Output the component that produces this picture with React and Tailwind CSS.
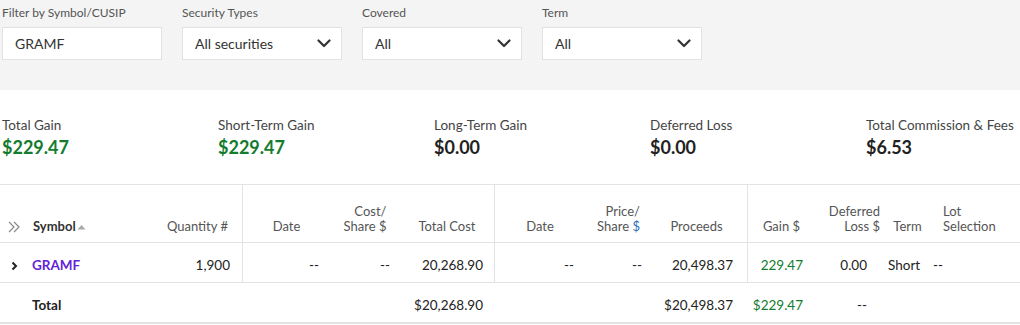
import React from "react";

const F = { fontFamily: "Lato, 'Noto Sans', sans-serif" };

function Chevron() {
  return (
    <svg width="14" height="9" viewBox="0 0 14 9" fill="none">
      <path d="M1.5 1.5 L7 7 L12.5 1.5" stroke="#333" strokeWidth="2.2" strokeLinecap="round" strokeLinejoin="round" />
    </svg>
  );
}

function Select({ label, value }) {
  return (
    <div className="flex flex-col w-[160px]">
      <div className="text-[12px] leading-[14px] text-[#555]">{label}</div>
      <div className="mt-[7px] h-[33px] bg-white border border-[#e2e2e2] flex items-center justify-between pl-[12px] pr-[10px]">
        <span className="text-[14px] text-[#333]">{value}</span>
        {value !== "GRAMF" && <Chevron />}
      </div>
    </div>
  );
}

function Stat({ label, value, green }) {
  return (
    <div className="flex flex-col">
      <div className="text-[13.5px] leading-[18px] text-[#444]">{label}</div>
      <div className={"text-[18px] leading-[24px] font-bold mt-[1px] " + (green ? "text-[#137b2e]" : "text-[#222]")}>{value}</div>
    </div>
  );
}

const cols = "grid grid-cols-[28px_130px_84px_88px_70px_94px_91px_67px_95px_68px_70px_45px_90px]";

export default function App() {
  return (
    <div className="w-[1020px] h-[325px] bg-white overflow-hidden" style={F}>
      <div className="h-[90px] bg-[#f4f4f4] pt-[6px] pl-[2px] flex gap-5">
        <Select label="Filter by Symbol/CUSIP" value="GRAMF" />
        <Select label="Security Types" value="All securities" />
        <Select label="Covered" value="All" />
        <Select label="Term" value="All" />
      </div>

      <div className="h-[94px] pl-[2px] pt-[26px] grid grid-cols-[216px_216px_216px_216px_216px]">
        <Stat label="Total Gain" value="$229.47" green />
        <Stat label="Short-Term Gain" value="$229.47" green />
        <Stat label="Long-Term Gain" value="$0.00" />
        <Stat label="Deferred Loss" value="$0.00" />
        <Stat label="Total Commission & Fees" value="$6.53" />
      </div>

      <div className="border-t border-[#e3e3e3]">
        {/* header */}
        <div className={cols + " h-[58px] border-b border-[#e3e3e3] text-[13px] leading-[15px] text-[#555]"}>
          <div className="flex items-end pb-[9px] pl-[8px]">
            <svg width="13" height="12" viewBox="0 0 13 12" fill="none">
              <path d="M1 1 L6 6 L1 11 M6 1 L11 6 L6 11" stroke="#888" strokeWidth="1.2" />
            </svg>
          </div>
          <div className="flex items-end pb-[8px] pl-[5px]">
            <span className="font-bold text-[#333]">Symbol</span>
            <svg width="9" height="6" viewBox="0 0 9 6" className="mb-[4px] ml-[1px]">
              <path d="M0.5 5.5 L4.5 1 L8.5 5.5 Z" fill="#aaa" />
            </svg>
          </div>
          <div className="flex items-end justify-end pb-[8px] pr-[14px]">Quantity #</div>
          <div className="flex items-end justify-center pb-[8px] border-l border-[#e3e3e3]">Date</div>
          <div className="flex items-end justify-center pb-[8px]"><div className="text-right">Cost/<br />Share $</div></div>
          <div className="flex items-end justify-center pb-[8px]">Total Cost</div>
          <div className="flex items-end justify-center pb-[8px] border-l border-[#e3e3e3]">Date</div>
          <div className="flex items-end justify-center pb-[8px]"><div className="text-right">Price/<br />Share <span className="text-[#2a6ebb]">$</span></div></div>
          <div className="flex items-end justify-center pb-[8px] pr-[6px]">Proceeds</div>
          <div className="flex items-end justify-center pb-[8px] border-l border-[#e3e3e3]">Gain $</div>
          <div className="flex items-end justify-end pb-[8px] pr-[5px]"><div className="text-right">Deferred<br />Loss $</div></div>
          <div className="flex items-end justify-center pb-[8px]">Term</div>
          <div className="flex items-end pb-[8px] pl-[13px]">Lot<br />Selection</div>
        </div>

        {/* data row */}
        <div className={cols + " h-[40px] border-b border-[#e3e3e3] text-[13.5px] text-[#222]"}>
          <div className="flex items-center pt-[6px] pl-[11px]">
            <svg width="7" height="10" viewBox="0 0 7 10" fill="none">
              <path d="M1.5 1.5 L5 5 L1.5 8.5" stroke="#222" strokeWidth="2" />
            </svg>
          </div>
          <div className="flex items-center pt-[6px] pl-[4px] font-bold text-[#6124d6]">GRAMF</div>
          <div className="flex items-center justify-end pt-[6px] pr-[12px]">1,900</div>
          <div className="flex items-center justify-end pt-[6px] pr-[11px] border-l border-[#e3e3e3]">--</div>
          <div className="flex items-center justify-end pt-[6px] pr-[10px]">--</div>
          <div className="flex items-center justify-end pt-[6px] pr-[11px]">20,268.90</div>
          <div className="flex items-center justify-end pt-[6px] pr-[11px] border-l border-[#e3e3e3]">--</div>
          <div className="flex items-center justify-end pt-[6px] pr-[10px]">--</div>
          <div className="flex items-center justify-end pt-[6px] pr-[14px]">20,498.37</div>
          <div className="flex items-center justify-end pt-[6px] pr-[12px] border-l border-[#e3e3e3] text-[#137b2e]">229.47</div>
          <div className="flex items-center justify-end pt-[6px] pr-[18px]">0.00</div>
          <div className="flex items-center pt-[6px] pl-[3px]">Short</div>
          <div className="flex items-center pt-[6px] pl-[3px]">--</div>
        </div>

        {/* total row */}
        <div className={cols + " h-[41px] border-b-2 border-[#e3e3e3] text-[13.5px] text-[#222]"}>
          <div />
          <div className="flex items-center pt-[6px] pl-[4px] font-bold">Total</div>
          <div />
          <div />
          <div />
          <div className="flex items-center justify-end pt-[6px] pr-[11px]">$20,268.90</div>
          <div />
          <div />
          <div className="flex items-center justify-end pt-[6px] pr-[14px]">$20,498.37</div>
          <div className="flex items-center justify-end pt-[6px] pr-[12px] text-[#137b2e]">$229.47</div>
          <div className="flex items-center justify-end pt-[6px] pr-[18px]">--</div>
          <div />
          <div />
        </div>
      </div>
    </div>
  );
}
